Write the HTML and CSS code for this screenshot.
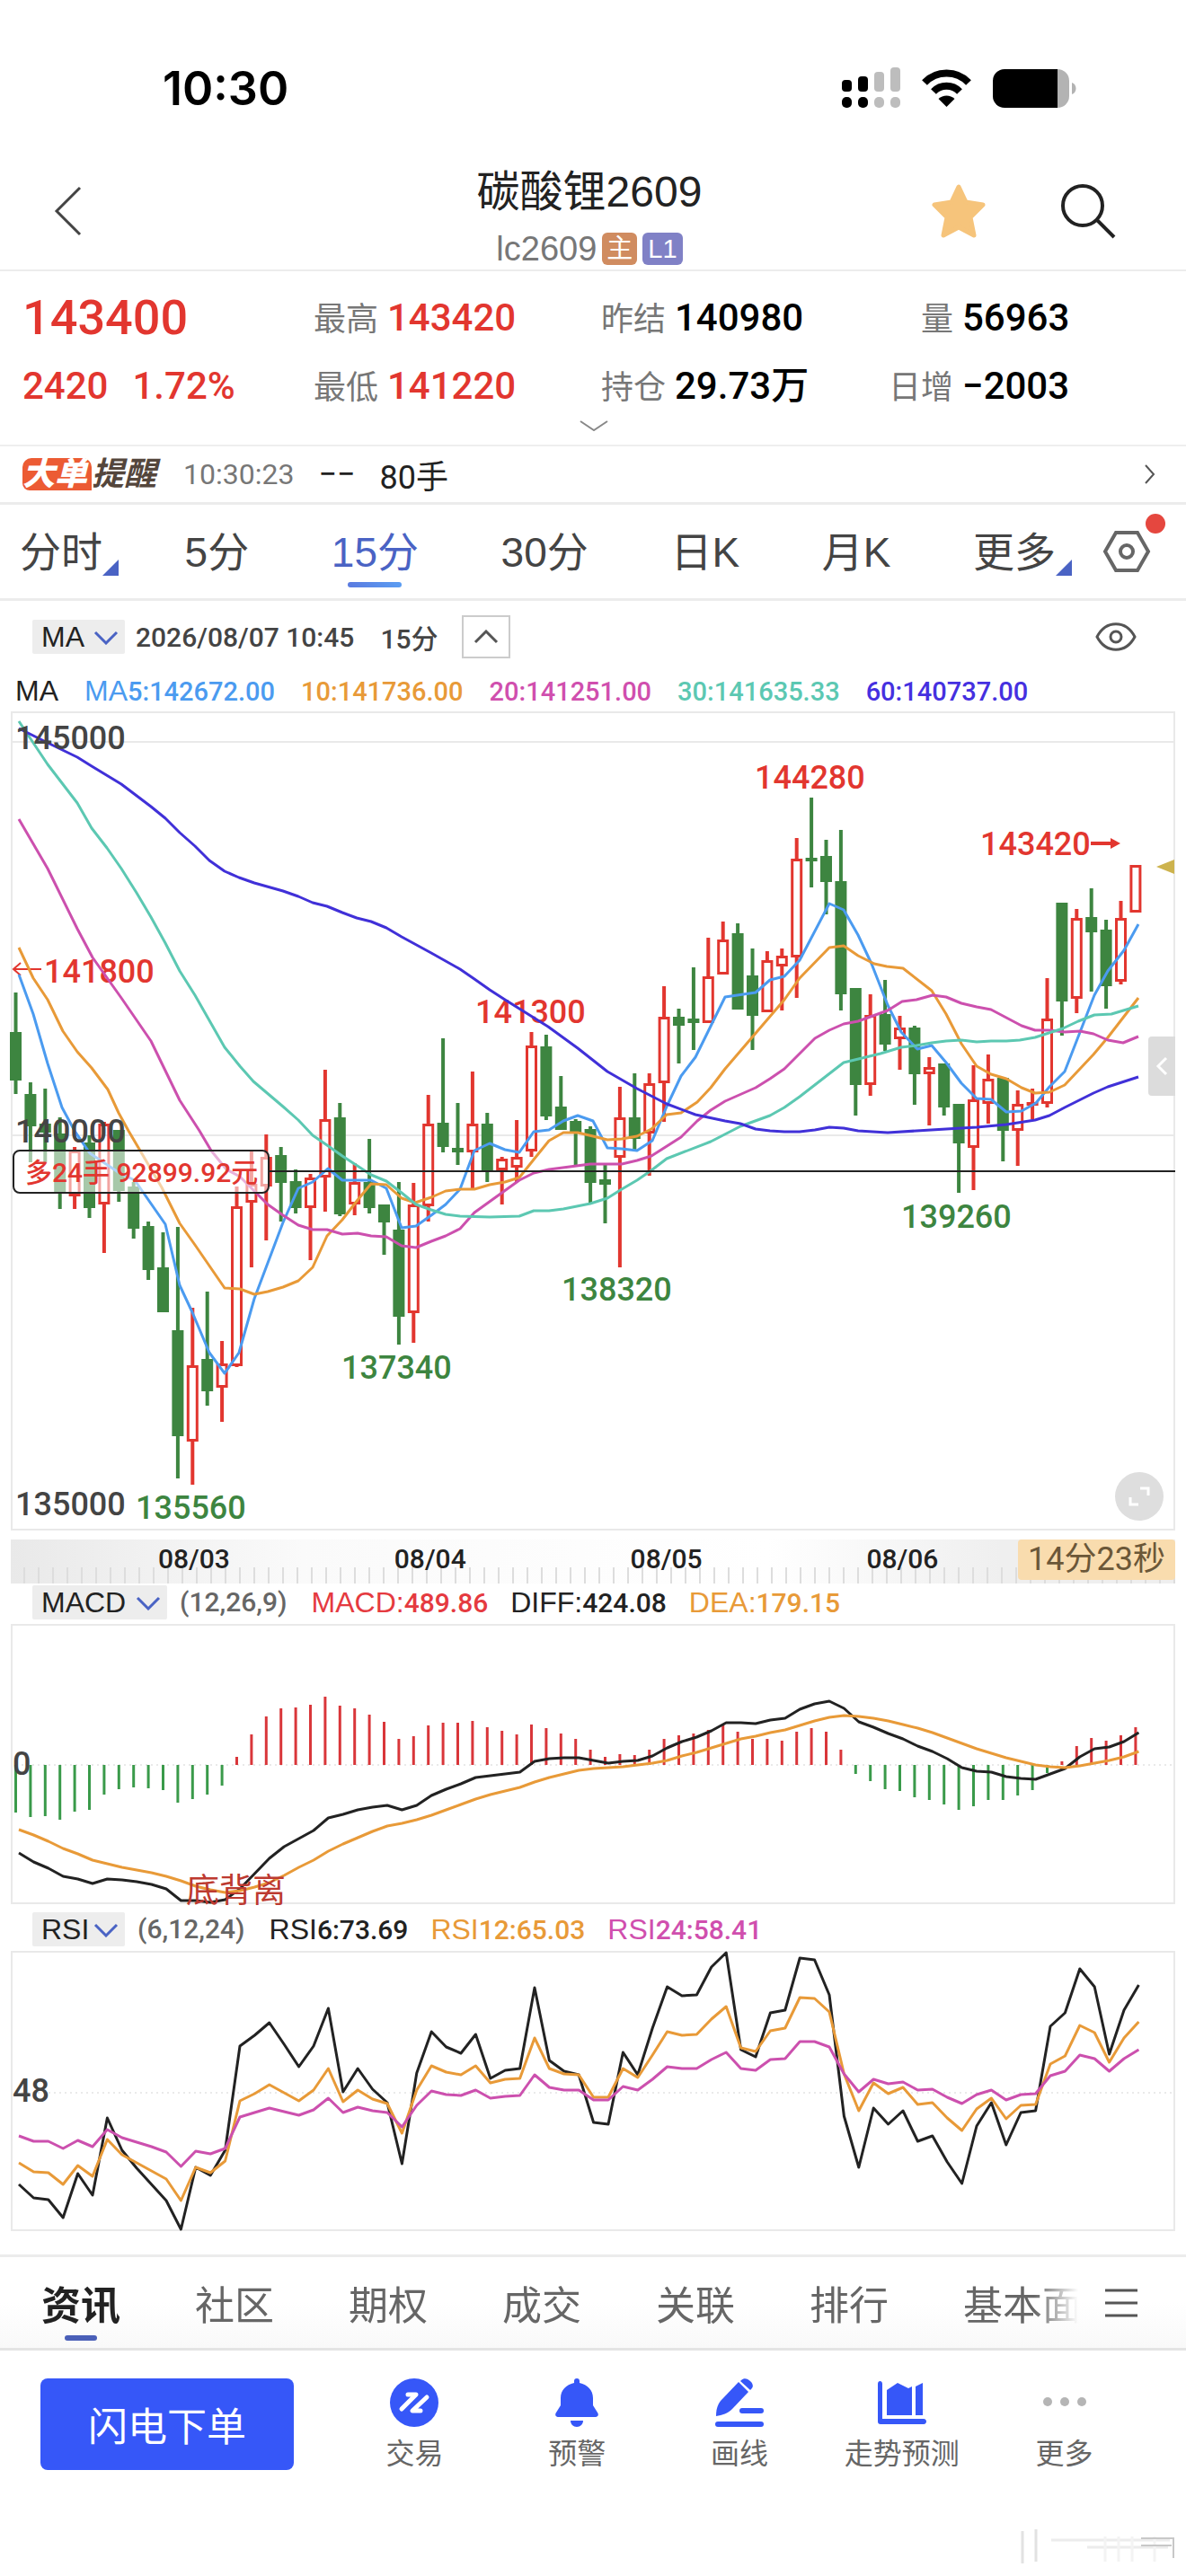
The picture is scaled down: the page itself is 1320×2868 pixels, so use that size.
FILE: index.html
```html
<!DOCTYPE html>
<html lang="zh-CN">
<head>
  <meta charset="UTF-8">
  <meta name="viewport" content="width=device-width, initial-scale=1.0">
  <title>碳酸锂2609</title>
  <link rel="stylesheet" href="styles.css">
</head>
<body>
  <!-- Status bar -->
  <div class="status-bar">
    <span class="clock">10:30</span>
    <svg class="status-icons" viewBox="0 0 264 46" width="264" height="46">
      <g fill="#000">
        <rect x="1" y="14" width="11" height="13" rx="4"/>
        <rect x="19" y="10" width="11" height="17" rx="4"/>
        <rect x="1" y="33" width="11" height="12" rx="5"/>
        <rect x="19" y="33" width="11" height="12" rx="5"/>
      </g>
      <g fill="#bdbdbd">
        <rect x="37" y="5" width="11" height="22" rx="4"/>
        <rect x="55" y="0" width="11" height="27" rx="4"/>
        <rect x="37" y="33" width="11" height="12" rx="5"/>
        <rect x="55" y="33" width="11" height="12" rx="5"/>
      </g>
      <path d="M93 17a34 34 0 0 1 49 0" fill="none" stroke="#000" stroke-width="8"/>
      <path d="M103 27a20 20 0 0 1 29 0" fill="none" stroke="#000" stroke-width="8"/>
      <path d="M117.500 44l-9-9a13 13 0 0 1 18 0z"/>
      <path d="M182 2h59v43h-59a13 13 0 0 1-13-13V15a13 13 0 0 1 13-13z"/>
      <path d="M241 2a13 13 0 0 1 13 13v17a13 13 0 0 1-13 13z" fill="#b3b3b3"/>
      <path d="M257 17c6 2 6 11 0 13z" fill="#b3b3b3"/>
    </svg>
  </div>

  <!-- Header -->
  <header class="header">
    <button class="icon-button" aria-label="返回">
      <svg width="32" height="56" viewBox="0 0 32 56"><path d="M29 2L3 28l26 26" fill="none" stroke="#444" stroke-width="3"/></svg>
    </button>
    <div class="title">
      <h1>碳酸锂2609</h1>
      <div class="subtitle">lc2609 <span class="badge main-badge">主</span><span class="badge level-badge">L1</span></div>
    </div>
    <div class="header-actions">
      <button class="icon-button" aria-label="自选">
        <svg width="62" height="62" viewBox="0 0 62 62"><path d="M31 4l8 17 19 3-14 14 4 20-17-9-17 9 4-20L4 24l19-3z" fill="#f6c47b" stroke="#f6c47b" stroke-width="5" stroke-linejoin="round"/></svg>
      </button>
      <button class="icon-button" aria-label="搜索">
        <svg width="62" height="62" viewBox="0 0 62 62"><g fill="none" stroke="#222" stroke-width="4"><circle cx="25" cy="25" r="22"/><path d="M41 41l19 19"/></g></svg>
      </button>
    </div>
  </header>

  <!-- Quote -->
  <section class="quote">
    <div class="quote-grid">
      <div class="price up">143400</div>
      <div><span class="label">最高</span><span class="value up">143420</span></div>
      <div><span class="label">昨结</span><span class="value">140980</span></div>
      <div><span class="label">量</span><span class="value">56963</span></div>
      <div class="change up"><span>2420</span><span>1.72%</span></div>
      <div><span class="label">最低</span><span class="value up">141220</span></div>
      <div><span class="label">持仓</span><span class="value">29.73万</span></div>
      <div><span class="label">日增</span><span class="value">−2003</span></div>
    </div>
    <button class="expand" aria-label="展开">
      <svg width="32" height="12" viewBox="0 0 32 12"><path d="M1 1l15 10L31 1" fill="none" stroke="#888" stroke-width="2"/></svg>
    </button>
  </section>

  <a class="alert-row" href="#">
    <span class="alert-logo"><b>大单</b><i>提醒</i></span>
    <span class="alert-time">10:30:23</span>
    <span class="alert-dash">−−</span>
    <span class="alert-volume">80手</span>
    <svg class="alert-arrow" width="12" height="22" viewBox="0 0 12 22"><path d="M1 1l9 10-9 10" fill="none" stroke="#555" stroke-width="2"/></svg>
  </a>

  <!-- Periods -->
  <nav class="periods">
    <div class="period-list">
      <button class="has-menu">分时</button>
      <button>5分</button>
      <button class="active">15分</button>
      <button>30分</button>
      <button>日K</button>
      <button>月K</button>
      <button class="has-menu">更多</button>
    </div>
    <button class="icon-button settings" aria-label="设置">
      <svg width="54" height="48" viewBox="0 0 54 48"><g fill="none" stroke="#666" stroke-width="4"><path d="M15 3h24l12 21-12 21H15L3 24z"/><circle cx="27" cy="24" r="7"/></g></svg>
    </button>
  </nav>

  <main>
    <div class="chart-bar">
      <label class="picker">
        <select aria-label="主图指标"><option>MA</option></select>
        <svg width="28" height="16" viewBox="0 0 28 16"><path d="M2 2l12 12L26 2" fill="none" stroke="#4a63c4" stroke-width="3"/></svg>
      </label>
      <span class="bar-time">2026/08/07 10:45</span>
      <span class="bar-period">15分</span>
      <button class="collapse" aria-label="收起">
        <svg width="28" height="16" viewBox="0 0 28 16"><path d="M2 14L14 2l12 12" fill="none" stroke="#555" stroke-width="3"/></svg>
      </button>
      <button class="icon-button eye" aria-label="显示">
        <svg width="46" height="32" viewBox="0 0 46 32"><g fill="none" stroke="#555" stroke-width="3"><path d="M2 16C12-3 34-3 44 16 34 35 12 35 2 16z"/><circle cx="23" cy="16" r="6"/></g></svg>
      </button>
    </div>

    <div class="legend">
      <span><em>MA</em></span>
      <span class="blue"><em>MA</em>5:142672.00</span>
      <span class="orange">10:141736.00</span>
      <span class="pink">20:141251.00</span>
      <span class="teal">30:141635.33</span>
      <span class="indigo">60:140737.00</span>
    </div>

    <div class="chart">
      <svg id="priceChart" viewBox="12 793 1296 913">
        <g class="grid">
          <path d="M12 794H1307V1704H13V794"/>
          <path d="M12 827H1307M12 1265H1307"/>
          <path d="M12 1704H1307" stroke-width="3"/>
        </g>
        <g id="candles"></g>
        <g class="price-text up-fill">
          <text x="840" y="879">144280</text>
          <text x="1091" y="953">143420</text>
          <text x="49" y="1095">141800</text>
          <text x="529" y="1140">141300</text>
        </g>
        <g class="price-text down-fill">
          <text x="625" y="1449">138320</text>
          <text x="380" y="1536">137340</text>
          <text x="151" y="1692">135560</text>
          <text x="1003" y="1368">139260</text>
        </g>
        <path d="M1214 940h24" stroke="#e2362f" stroke-width="4"/>
        <path d="M1236 934l11 6-11 6z" fill="#e2362f"/>
        <path d="M46 1080H15M23 1073l-8 7 8 7" fill="none" stroke="#e2362f" stroke-width="2"/>
        <g id="maLines"></g>
        <g class="price-text axis-fill">
          <text x="17" y="835">145000</text>
          <text x="17" y="1273">140000</text>
          <text x="17" y="1688">135000</text>
        </g>
        <path d="M299 1305H1308" stroke="#222" stroke-width="2"/>
        <rect x="15" y="1282" width="284" height="47" rx="7" fill="#fff" fill-opacity=".55" stroke="#222" stroke-width="2"/>
        <text class="position-text" x="28" y="1317">多24手 92899.92元</text>
        <path d="M1287 966l20-8v16z" fill="#cdb34e"/>
      </svg>
      <button class="side-tab" aria-label="侧栏">
        <svg width="14" height="22" viewBox="0 0 14 22"><path d="M12 2L3 11l9 9" fill="none" stroke="#fff" stroke-width="3"/></svg>
      </button>
      <button class="fullscreen" aria-label="全屏">
        <svg width="24" height="22" viewBox="0 0 24 22"><path d="M13 2h9v8M11 20H2v-8" fill="none" stroke="#fff" stroke-width="3"/></svg>
      </button>
    </div>

    <div class="time-axis">
      <div class="dates"><span>08/03</span><span>08/04</span><span>08/05</span><span>08/06</span></div>
      <span class="countdown">14分23秒</span>
    </div>

    <div class="indicator-bar">
      <label class="picker wide">
        <select aria-label="副图一指标"><option>MACD</option></select>
        <svg width="28" height="16" viewBox="0 0 28 16"><path d="M2 2l12 12L26 2" fill="none" stroke="#4a63c4" stroke-width="3"/></svg>
      </label>
      <span class="params">(12,26,9)</span>
      <span class="red"><em>MACD:</em>489.86</span>
      <span><em>DIFF:</em>424.08</span>
      <span class="orange"><em>DEA:</em>179.15</span>
    </div>
    <div class="chart">
      <svg id="macdChart" viewBox="12 1807 1296 313">
        <g class="grid">
          <path d="M12 1808H1307V2118H13V1808"/>
          <path d="M12 1964H1307" stroke-dasharray="2 4"/>
        </g>
        <g id="macdBars"></g>
        <text class="price-text axis-fill" x="14" y="1975">0</text>
        <g id="macdLines"></g>
        <text class="signal-text" x="207" y="2117">底背离</text>
      </svg>
    </div>

    <div class="indicator-bar">
      <label class="picker">
        <select aria-label="副图二指标"><option>RSI</option></select>
        <svg width="28" height="16" viewBox="0 0 28 16"><path d="M2 2l12 12L26 2" fill="none" stroke="#4a63c4" stroke-width="3"/></svg>
      </label>
      <span class="params">(6,12,24)</span>
      <span><em>RSI</em>6:73.69</span>
      <span class="orange"><em>RSI</em>12:65.03</span>
      <span class="pink"><em>RSI</em>24:58.41</span>
    </div>
    <div class="chart">
      <svg id="rsiChart" viewBox="12 2171 1296 313">
        <g class="grid">
          <path d="M12 2172H1307V2482H13V2172"/>
          <path d="M12 2329H1307" stroke-dasharray="2 4"/>
        </g>
        <text class="price-text axis-fill" x="14" y="2339">48</text>
        <g id="rsiLines"></g>
      </svg>
    </div>
  </main>

  <!-- Info tabs -->
  <nav class="info-tabs">
    <div class="info-list">
      <button class="active">资讯</button>
      <button>社区</button>
      <button>期权</button>
      <button>成交</button>
      <button>关联</button>
      <button>排行</button>
      <button>基本面</button>
    </div>
    <button class="icon-button" aria-label="菜单">
      <svg width="36" height="32" viewBox="0 0 36 32"><path d="M0 2h36M0 16h36M0 30h36" stroke="#555" stroke-width="3"/></svg>
    </button>
  </nav>

  <footer class="bottom-bar">
    <button class="order-button">闪电下单</button>
    <div class="actions">
      <button>
        <svg width="54" height="54" viewBox="0 0 54 54"><circle cx="27" cy="27" r="27" fill="#3657f8"/><path d="M20 18h9L13 34M41 21L25 36h9" fill="none" stroke="#fff" stroke-width="5" stroke-linecap="round" stroke-linejoin="round"/></svg>
        交易
      </button>
      <button>
        <svg width="54" height="54" viewBox="0 0 54 54"><path d="M24 3a3 3 0 0 1 6 0v2c9 2 15 8 15 17v8l5 8c2 3 0 5-3 5H7c-3 0-5-2-3-5l5-8v-8C9 13 15 7 24 5zM20 47h14c0 4-3 7-7 7s-7-3-7-7z" fill="#3657f8"/></svg>
        预警
      </button>
      <button>
        <svg width="54" height="54" viewBox="0 0 54 54"><g fill="#3657f8"><path d="M26 4l11 11-18 19c-5 5-11 7-18 8 0-6 1-12 5-17z"/><path d="M29 2c3-3 7-2 10 1s4 6 1 9l-1 1L28 3z"/><rect x="27" y="33" width="27" height="6" rx="3"/><rect x="0" y="48" width="54" height="6" rx="3"/></g></svg>
        画线
      </button>
      <button>
        <svg width="54" height="54" viewBox="0 0 54 54"><g fill="#3657f8"><path d="M0 6c0-4 5-4 5 0v39h46c4 0 4 6 0 6H3c-2 0-3-1-3-3z"/><path d="M10 13l12-8 12 6 4-2v32H10zM42 9l8-4v36h-8z"/></g></svg>
        走势预测
      </button>
      <button>
        <svg width="54" height="54" viewBox="0 0 54 54"><g fill="#b5b5b5"><circle cx="8" cy="26" r="5"/><circle cx="27" cy="26" r="5"/><circle cx="46" cy="26" r="5"/></g></svg>
        更多
      </button>
    </div>
    <svg class="watermark" width="190" height="48" viewBox="0 0 190 48">
      <path d="M18 6v36M33 4v36" fill="none" stroke="#e2e2e2" stroke-width="3"/>
      <path d="M50 16h132M90 24h90" fill="none" stroke="#ececec" stroke-width="3"/>
      <path d="M110 12v28M125 12v28M140 12v28M165 12v28" stroke="#f3f3f3" stroke-width="3"/>
      <path d="M150 14h36v22M150 22h34" fill="none" stroke="#c8c8c8" stroke-width="2"/>
    </svg>
  </footer>

  <script src="script.js"></script>
</body>
</html>
```
FILE: styles.css
```css
/* General Styles */
* {
  box-sizing: border-box;
}

body {
  margin: 0;
  background-color: #fff;
  color: #222;
  font-family: "Liberation Sans", "Noto Sans CJK SC", sans-serif;
  font-size: 32px;
}

button {
  padding: 0;
  border: none;
  background: none;
  color: inherit;
  font-family: inherit;
  font-size: inherit;
  cursor: pointer;
}

svg {
  display: block;
}

.icon-button {
  flex: none;
}

/* Status Bar */
.status-bar {
  display: flex;
  justify-content: space-between;
  align-items: center;
  height: 196px;
  padding: 0 120px 0 181px;
}

.clock {
  font-family: Inter, sans-serif;
  font-size: 52px;
  font-weight: 600;
  color: #000;
}

/* Header */
.header {
  display: flex;
  justify-content: space-between;
  align-items: center;
  position: relative;
  height: 106px;
  padding: 0 78px 26px 60px;
  border-bottom: 2px solid #ececec;
}

.title {
  position: absolute;
  left: 0;
  right: 8px;
  top: -14px;
  text-align: center;
  pointer-events: none;
}

.title h1 {
  margin: 0;
  font-size: 48px;
  font-weight: normal;
  line-height: 64px;
}

.subtitle {
  display: flex;
  justify-content: center;
  align-items: center;
  gap: 6px;
  margin-top: 13px;
  font-size: 38px;
  line-height: 36px;
  color: #777;
}

.badge {
  height: 36px;
  padding: 0 5px;
  border-radius: 6px;
  color: #fff;
  font-size: 29px;
}

.main-badge {
  background-color: #d08c60;
}

.level-badge {
  padding: 0 6px;
  background-color: #8081c6;
}

.header-actions {
  display: flex;
  gap: 82px;
}

/* Quote */
.quote {
  height: 195px;
  padding: 14px 0 0 25px;
  border-bottom: 2px solid #eee;
}

.quote-grid {
  display: grid;
  grid-template-columns: 324fr 320fr 320fr 331fr;
  line-height: 76px;
  font-family: Roboto, "Noto Sans CJK SC", sans-serif;
}

.quote-grid > div {
  display: flex;
  align-items: baseline;
  gap: 10px;
  height: 76px;
}

.quote-grid .label {
  width: 72px;
  font-size: 36px;
  text-align: right;
  color: #777;
}

.value,
.change {
  font-size: 42px;
  font-weight: 500;
  color: #000;
}

.quote-grid .price {
  font-size: 54px;
  font-weight: 500;
}

.quote-grid .change {
  gap: 27px;
}

.quote .up {
  color: #e2362f;
}

.expand {
  display: block;
  margin: 0 auto;
  position: relative;
  left: -12px;
}

/* Big Order Alert */
.alert-row {
  display: flex;
  align-items: center;
  height: 65px;
  padding: 0 34px 0 25px;
  border-bottom: 3px solid #ececec;
  color: #222;
  font-family: Roboto, "Noto Sans CJK SC", sans-serif;
  font-size: 36px;
  text-decoration: none;
}

.alert-logo {
  display: flex;
  margin-right: 30px;
  font-size: 36px;
  font-style: italic;
  font-weight: bold;
  line-height: 36px;
}

.alert-logo b {
  width: 77px;
  border-radius: 10px 10px 0 8px;
  background-color: #ec5b33;
  color: #fff;
}

.alert-logo i {
  color: #54463c;
}

.alert-time {
  font-size: 32px;
  color: #777;
}

.alert-dash {
  margin: 0 27px;
}

.alert-arrow {
  margin-left: auto;
}

/* Periods */
.periods {
  display: flex;
  justify-content: space-between;
  align-items: center;
  height: 107px;
  padding: 0 39px 0 22px;
  border-bottom: 3px solid #ececec;
  color: #444;
}

.period-list {
  display: flex;
  justify-content: space-between;
  width: 93%;
  max-width: 1153px;
  font-size: 46px;
}

.period-list button {
  position: relative;
  height: 104px;
  padding-bottom: 6px;
}

.period-list .active {
  color: #4a63c4;
}

.period-list .active::after {
  content: "";
  position: absolute;
  left: 18px;
  bottom: 12px;
  width: 60px;
  height: 6px;
  border-radius: 3px;
  background: linear-gradient(90deg, #5b7be0, #5b9df2);
}

.has-menu::after {
  content: "";
  position: absolute;
  left: 92px;
  bottom: 25px;
  border-left: 18px solid transparent;
  border-bottom: 18px solid #4a63c4;
}

.settings {
  position: relative;
}

.settings::after {
  content: "";
  position: absolute;
  right: -16px;
  top: -18px;
  width: 22px;
  height: 22px;
  border-radius: 50%;
  background-color: #e5473f;
}

/* Toolbars */
.chart-bar,
.legend,
.indicator-bar {
  display: flex;
  align-items: center;
  font-family: Roboto, "Noto Sans CJK SC", sans-serif;
  font-size: 30px;
  font-weight: 500;
  white-space: nowrap;
}

.chart-bar {
  height: 80px;
  padding: 0 55px 0 36px;
  color: #444;
}

.picker {
  position: relative;
  width: 103px;
  height: 38px;
}

.picker.wide {
  width: 150px;
}

.picker select {
  display: block;
  appearance: none;
  width: 100%;
  height: 38px;
  padding: 0 0 0 10px;
  border: none;
  border-radius: 2px;
  background-color: #ededed;
  color: #222;
  font-family: "Liberation Sans", sans-serif;
  font-size: 32px;
}

.picker svg {
  position: absolute;
  right: 7px;
  top: 12px;
  pointer-events: none;
}

.bar-time {
  margin-left: 12px;
}

.bar-period {
  margin-left: 29px;
}

.collapse {
  display: flex;
  justify-content: center;
  align-items: center;
  width: 54px;
  height: 48px;
  margin-left: 26px;
  border: 2px solid #ccc;
}

.eye {
  margin-left: auto;
}

.legend {
  gap: 29px;
  height: 43px;
  padding: 0 0 2px 17px;
  font-size: 29px;
}

.legend em,
.indicator-bar em {
  font-family: "Liberation Sans", sans-serif;
  font-size: 32px;
  font-style: normal;
  font-weight: normal;
}

.indicator-bar {
  align-items: flex-start;
  gap: 25px;
  height: 43px;
  padding: 0 36px;
  line-height: 38px;
}

.chart + .indicator-bar {
  margin-top: 8px;
}

.indicator-bar .params {
  margin-left: -11px;
  margin-right: 2px;
  color: #666;
}

.red {
  color: #e53a40;
}

.blue {
  color: #4b9bf0;
}

.orange {
  color: #e89a38;
}

.pink {
  color: #d04fae;
}

.teal {
  color: #5cc8b2;
}

.indigo {
  color: #4530e0;
}

/* Charts */
.chart {
  position: relative;
  margin: 0 12px;
}

.chart > svg {
  width: 100%;
  height: auto;
  overflow: visible;
}

.grid path {
  fill: none;
  stroke: #e9e9e9;
  stroke-width: 2;
}

.lines {
  fill: none;
  stroke-width: 3;
  stroke-linejoin: round;
}

.price-text {
  font-family: Roboto, sans-serif;
  font-size: 36px;
  font-weight: 500;
}

.axis-fill {
  fill: #444;
}

.up-fill {
  fill: #e2362f;
}

.down-fill {
  fill: #3d8540;
}

.position-text {
  font-family: Roboto, "Noto Sans CJK SC", sans-serif;
  font-size: 30px;
  font-weight: 500;
  fill: #e2362f;
}

.signal-text {
  font-family: "Noto Sans CJK SC", sans-serif;
  font-size: 37px;
  fill: #bd3a30;
}

.side-tab {
  display: flex;
  justify-content: center;
  align-items: center;
  position: absolute;
  right: 0;
  top: 362px;
  width: 30px;
  height: 66px;
  border-radius: 4px 0 0 4px;
  background-color: #dcdcdc;
}

.fullscreen {
  display: flex;
  justify-content: center;
  align-items: center;
  position: absolute;
  right: 13px;
  bottom: 12px;
  width: 54px;
  height: 54px;
  border-radius: 50%;
  background-color: #dedede;
}

/* Time Axis */
.time-axis {
  display: flex;
  justify-content: space-between;
  height: 49px;
  margin: 9px 12px 2px;
  background:
    repeating-linear-gradient(90deg, transparent 0 14px, #ddd 14px 16px) bottom / 100% 18px no-repeat,
    linear-gradient(90deg, #e9e9e9, #fafafa 25%, #fff 65%, #efefef 85%);
}

.dates {
  display: flex;
  justify-content: space-between;
  width: 67%;
  margin-left: 164px;
  font-family: Roboto, sans-serif;
  font-size: 30px;
  font-weight: 500;
  line-height: 44px;
}

.countdown {
  height: 45px;
  padding: 0 11px;
  border-radius: 4px;
  background-color: #f9dcae;
  color: #6b5738;
  font-family: Roboto, "Noto Sans CJK SC", sans-serif;
  font-size: 36px;
  line-height: 45px;
}

/* Info Tabs */
.info-tabs {
  display: flex;
  justify-content: space-between;
  align-items: center;
  height: 107px;
  margin-top: 25px;
  padding: 0 54px 0 46px;
  border-top: 3px solid #ececec;
  border-bottom: 3px solid #e4e4e4;
  background: linear-gradient(#fff 50%, #f9f9f9);
  color: #666;
}

.info-list {
  display: flex;
  gap: 83px;
  width: 1160px;
  overflow: hidden;
  font-size: 44px;
  -webkit-mask-image: linear-gradient(90deg, #000 1105px, transparent 1154px);
  mask-image: linear-gradient(90deg, #000 1105px, transparent 1154px);
}

.info-list button {
  flex: none;
  position: relative;
  height: 101px;
}

.info-list .active {
  color: #222;
  font-weight: bold;
}

.info-list .active::after {
  content: "";
  position: absolute;
  left: 26px;
  bottom: 8px;
  width: 36px;
  height: 6px;
  border-radius: 3px;
  background-color: #4a5fb8;
}

/* Bottom Bar */
.bottom-bar {
  display: flex;
  align-items: flex-start;
  position: relative;
  height: 251px;
  padding: 31px 45px 0;
}

.order-button {
  flex: none;
  width: 282px;
  height: 102px;
  border-radius: 8px;
  background-color: #3657f8;
  color: #fff;
  font-size: 44px;
}

.actions {
  display: grid;
  grid-template-columns: repeat(5, 1fr);
  flex: 1;
  margin-left: 44px;
}

.actions button {
  display: flex;
  flex-direction: column;
  align-items: center;
  gap: 6px;
  color: #666;
  line-height: 48px;
}

.watermark {
  position: absolute;
  right: 10px;
  bottom: 8px;
}
```
FILE: script.js
```js
const RED = '#e2362f';
const GREEN = '#3d8540';
const STEP = 16.4;

// [high, body top, body bottom, low, up]
const candles = [
  [1106,1150,1204,1219,0],[1206,1219,1255,1295,0],[1213,1252,1262,1295,0],[1245,1263,1329,1347,0],
  [1278,1282,1333,1347,1],[1265,1273,1346,1357,0],[1250,1252,1342,1396,1],[1259,1259,1327,1339,0],
  [1317,1322,1369,1380,0],[1361,1366,1415,1426,0],[1373,1412,1462,1462,0],[1367,1482,1600,1647,0],
  [1457,1521,1606,1654,1],[1439,1514,1550,1566,0],[1494,1519,1546,1584,1],[1322,1344,1522,1523,1],
  [1282,1319,1340,1412,1],[1264,1289,1322,1382,1],[1278,1287,1318,1361,0],[1303,1316,1346,1352,0],
  [1308,1312,1346,1404,1],[1192,1247,1312,1350,1],[1229,1245,1353,1355,0],[1296,1317,1342,1354,1],
  [1269,1317,1346,1352,0],[1342,1342,1362,1398,0],[1317,1370,1467,1498,0],[1318,1342,1463,1496,1],
  [1220,1252,1344,1361,1],[1157,1251,1278,1284,0],[1229,1279,1284,1298,0],[1194,1252,1284,1325,1],
  [1240,1252,1304,1317,0],[1289,1291,1304,1342,1],[1248,1289,1301,1317,1],[1150,1165,1283,1289,1],
  [1153,1166,1244,1248,0],[1199,1233,1259,1259,0],[1247,1249,1262,1298,0],[1255,1258,1318,1340,0],
  [1297,1314,1320,1363,0],[1211,1245,1290,1412,1],[1196,1245,1269,1282,0],[1196,1207,1263,1310,1],
  [1099,1133,1207,1250,1],[1124,1133,1143,1185,0],[1078,1135,1140,1170,0],[1045,1088,1140,1140,1],
  [1027,1047,1086,1086,1],[1029,1040,1125,1125,0],[1057,1087,1132,1170,0],[1060,1070,1128,1128,1],
  [1057,1065,1077,1126,1],[934,957,1067,1112,1],[889,956,960,989,0],[936,954,983,1019,0],
  [925,982,1108,1126,0],[1101,1101,1209,1243,0],[1108,1131,1209,1221,1],[1092,1130,1164,1171,0],
  [1132,1145,1158,1192,1],[1143,1145,1197,1231,0],[1178,1189,1197,1254,1],[1185,1185,1234,1243,0],
  [1230,1230,1274,1329,0],[1187,1225,1279,1326,1],[1175,1202,1230,1252,1],[1201,1201,1260,1294,0],
  [1215,1230,1260,1299,1],[1213,1228,1232,1247,1],[1090,1135,1230,1234,1],[1006,1006,1116,1154,0],
  [1013,1023,1113,1129,1],[990,1022,1039,1105,0],[1025,1036,1099,1124,0],[1004,1023,1094,1097,1],
  [964,964,1017,1017,1]
];

const averages = [
  { color: '#4b9bf0', points: '21,1086 37,1130 53,1185 69,1234 83,1260 100,1285 133,1307 150,1315 168,1341 184,1364 200,1432 214,1462 233,1507 250,1530 266,1507 283,1447 315,1362 332,1324 348,1317 365,1302 381,1315 413,1315 430,1324 447,1368 463,1366 480,1354 496,1342 512,1325 528,1282 545,1274 562,1281 578,1284 594,1261 611,1259 627,1249 643,1243 660,1249 676,1279 692,1280 709,1282 726,1271 742,1233 758,1199 774,1178 807,1111 841,1106 857,1092 873,1088 890,1070 923,1007 939,1014 955,1042 970,1074 988,1120 1003,1150 1021,1169 1037,1165 1053,1184 1070,1207 1087,1224 1103,1225 1120,1239 1137,1238 1153,1229 1168,1211 1185,1194 1218,1109 1233,1082 1251,1059 1267,1030' },
  { color: '#e89a38', points: '21,1056 37,1090 53,1114 70,1149 86,1172 102,1190 120,1214 132,1240 143,1260 180,1323 200,1363 217,1387 250,1435 267,1436 283,1442 298,1439 315,1434 332,1427 348,1412 364,1377 381,1359 398,1337 413,1319 430,1320 447,1335 462,1340 480,1334 496,1327 512,1325 528,1325 545,1320 562,1317 578,1312 594,1292 611,1271 627,1262 643,1262 660,1266 676,1270 692,1269 709,1266 725,1258 742,1242 758,1240 776,1228 791,1212 807,1191 873,1114 890,1090 923,1056 939,1054 955,1065 973,1074 987,1077 1005,1079 1037,1104 1053,1130 1070,1163 1087,1188 1103,1197 1120,1202 1137,1212 1152,1218 1168,1217 1185,1209 1217,1175 1233,1156 1267,1112' },
  { color: '#cc50ae', points: '21,913 53,968 86,1035 103,1067 135,1112 168,1160 200,1226 222,1260 235,1282 252,1303 267,1311 283,1327 298,1342 315,1354 332,1365 348,1370 364,1370 381,1375 398,1374 413,1377 430,1378 447,1388 463,1390 480,1383 496,1377 512,1369 528,1351 578,1315 594,1307 611,1303 657,1297 692,1297 709,1293 725,1288 758,1267 776,1249 791,1237 807,1227 841,1212 857,1202 873,1191 907,1157 923,1148 939,1141 955,1138 988,1126 1004,1116 1020,1114 1038,1109 1053,1111 1070,1118 1087,1122 1103,1125 1137,1143 1152,1148 1168,1148 1185,1150 1202,1149 1217,1152 1233,1159 1250,1162 1267,1155' },
  { color: '#5cc8b2', points: '21,804 53,852 86,895 102,923 119,945 135,968 152,995 168,1022 184,1051 200,1082 217,1109 250,1167 267,1188 282,1205 315,1233 332,1248 348,1265 364,1276 381,1288 413,1309 430,1316 447,1329 463,1342 480,1348 496,1353 512,1355 545,1356 578,1355 594,1349 611,1349 627,1347 657,1341 676,1335 692,1325 709,1315 725,1304 742,1291 791,1272 824,1255 857,1243 873,1234 890,1222 939,1184 980,1174 1003,1167 1020,1165 1037,1162 1053,1160 1070,1159 1087,1161 1103,1160 1120,1160 1135,1159 1152,1156 1183,1146 1200,1138 1218,1131 1237,1130 1267,1121' },
  { color: '#4030d8', points: '21,812 53,828 86,844 102,854 135,874 168,899 184,912 200,928 217,943 233,959 250,971 266,978 283,984 315,993 332,999 348,1006 364,1010 381,1017 397,1023 413,1027 430,1034 447,1044 480,1062 512,1080 528,1091 545,1103 562,1114 610,1144 643,1168 676,1194 709,1213 742,1230 774,1242 807,1249 824,1252 841,1258 857,1260 873,1261 890,1261 907,1259 923,1256 939,1257 955,1260 988,1262 1020,1260 1053,1258 1087,1256 1120,1253 1152,1248 1168,1243 1185,1234 1217,1218 1233,1211 1267,1200' }
];

const macd = [2017,2022,2021,2025,2016,2014,1997,1991,1989,1990,1992,2006,2002,1997,1987,1955,1930,1910,1901,1900,1897,1888,1898,1901,1908,1916,1935,1932,1920,1917,1917,1915,1922,1926,1930,1919,1923,1929,1935,1947,1955,1952,1953,1947,1935,1931,1929,1925,1919,1927,1935,1935,1937,1927,1923,1927,1947,1974,1982,1991,1993,2000,2003,2008,2014,2010,2003,2003,1998,1992,1973,1960,1943,1934,1937,1931,1922];
const diff = [2062,2072,2079,2088,2091,2096,2091,2092,2094,2097,2102,2115,2115,2117,2114,2102,2085,2068,2055,2046,2037,2023,2019,2014,2011,2009,2014,2009,1998,1991,1985,1978,1976,1974,1972,1960,1957,1956,1956,1959,1962,1960,1959,1954,1945,1938,1933,1926,1917,1917,1918,1914,1912,1902,1896,1893,1901,1916,1922,1929,1935,1943,1949,1957,1967,1971,1972,1977,1979,1980,1974,1968,1955,1946,1944,1938,1928];
const dea = [2036,2042,2049,2057,2063,2070,2074,2078,2081,2084,2088,2093,2099,2103,2106,2104,2100,2095,2087,2078,2070,2060,2052,2045,2038,2032,2029,2025,2020,2014,2008,2002,1997,1993,1989,1983,1978,1974,1970,1968,1967,1966,1964,1962,1959,1954,1950,1945,1940,1935,1932,1928,1925,1920,1915,1911,1909,1910,1912,1915,1919,1923,1928,1934,1940,1946,1951,1956,1960,1964,1966,1967,1965,1962,1959,1955,1949];

const rsi6 = [2431,2446,2448,2468,2419,2443,2357,2393,2413,2431,2449,2481,2412,2421,2393,2277,2265,2251,2275,2300,2277,2235,2328,2302,2325,2340,2408,2307,2261,2278,2285,2264,2313,2304,2302,2212,2293,2305,2309,2362,2364,2284,2309,2257,2211,2221,2220,2189,2173,2281,2289,2240,2237,2179,2181,2220,2355,2412,2346,2364,2349,2383,2377,2406,2430,2366,2340,2387,2351,2349,2255,2240,2191,2211,2286,2237,2209];
const rsi12 = [2407,2417,2418,2431,2410,2422,2381,2398,2407,2416,2425,2449,2412,2418,2405,2338,2330,2320,2329,2338,2326,2302,2339,2326,2336,2341,2374,2326,2299,2306,2309,2299,2318,2314,2313,2268,2302,2308,2309,2334,2334,2302,2312,2287,2261,2265,2264,2247,2233,2279,2283,2260,2257,2223,2224,2239,2308,2349,2318,2330,2323,2342,2340,2357,2371,2347,2335,2358,2343,2342,2297,2288,2254,2262,2295,2268,2250];
const rsi24 = [2377,2383,2383,2391,2382,2389,2370,2379,2384,2389,2395,2411,2394,2397,2391,2356,2351,2346,2350,2354,2348,2335,2351,2345,2349,2351,2367,2343,2327,2331,2332,2326,2335,2333,2332,2309,2323,2326,2326,2337,2337,2322,2326,2314,2300,2302,2302,2292,2284,2302,2304,2292,2291,2272,2272,2278,2308,2328,2314,2319,2317,2326,2325,2334,2341,2331,2326,2337,2331,2330,2310,2305,2287,2291,2305,2291,2281];

function polyline(points, color) {
  return `<polyline class="lines" points="${points}" stroke="${color}"/>`;
}

function series(values, color) {
  return polyline(values.map((y, i) => `${21 + i * STEP},${y}`).join(' '), color);
}

document.getElementById('candles').innerHTML = candles.map(([high, top, bottom, low, up], i) => {
  const x = 17.5 + i * STEP;
  const color = up ? RED : GREEN;
  const body = up
    ? `<rect x="${x - 5}" y="${top + 1.5}" width="10" height="${bottom - top - 3}" fill="none" stroke="${color}" stroke-width="3"/>`
    : `<rect x="${x - 6.5}" y="${top}" width="13" height="${bottom - top}" fill="${color}"/>`;
  return `<path d="M${x} ${high}V${top}M${x} ${bottom}V${low}" stroke="${color}" stroke-width="4"/>${body}`;
}).join('');

document.getElementById('maLines').innerHTML = averages.map(a => polyline(a.points, a.color)).join('');

// Histogram around the zero line
document.getElementById('macdBars').innerHTML = macd.map((y, i) =>
  `<path d="M${17.5 + i * STEP} 1964V${y}" stroke="${y < 1964 ? '#d9363a' : '#3a9a4a'}" stroke-width="3"/>`
).join('');

document.getElementById('macdLines').innerHTML = series(diff, '#222') + series(dea, '#e89a38');
document.getElementById('rsiLines').innerHTML = series(rsi6, '#222') + series(rsi12, '#e89a38') + series(rsi24, '#cc50ae');
```
